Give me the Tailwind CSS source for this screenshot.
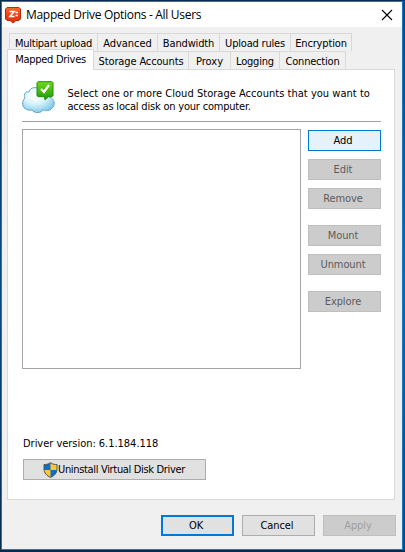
<!DOCTYPE html>
<html lang="en"><head><meta charset="utf-8"><title>Mapped Drive Options - All Users</title>
<script src="https://cdn.jsdelivr.net/npm/@tailwindcss/browser@4"></script></head>
<body class="w-[405px] h-[552px] overflow-hidden bg-linear-to-b from-[#062c55] via-[#064b88] to-[#052c50] pt-px pl-px font-['DejaVu_Sans_Condensed','DejaVu_Sans',sans-serif] font-stretch-condensed text-[11px] leading-[13px] text-black">
<div class="flex">
<main class="w-[402px] h-[549px] border border-[#1878c8] bg-[#f0f0f0] flex flex-col">
  <header class="h-[25px] shrink-0 bg-white flex items-center">
    <svg class="ml-[3px] mt-[2px] shrink-0" width="17" height="17" viewBox="0 0 17 17"><defs><linearGradient id="r" x2="0" y2="1"><stop stop-color="#ff6b35"/><stop offset=".5" stop-color="#ef3e12"/><stop offset="1" stop-color="#d73310"/></linearGradient></defs><path d="M2 .5h12l1.500 1.500v10L14 13.500h-3L8 16l-3-2.500H2L.5 12V2z" fill="url(#r)" stroke="#b52b0d"/><path d="M4.500 4.500h4.500L5 9.500h4.500M10.500 5.500h2.500M10.500 8.500h2.500" fill="none" stroke="#fff" stroke-width="1.700"/></svg>
    <h1 class="ml-[4px] text-[12px] leading-[16px] whitespace-nowrap font-['Open_Sans',sans-serif] font-stretch-normal tracking-[-0.300px]">Mapped Drive Options - All Users</h1>
    <svg class="ml-auto mr-[9px]" width="12" height="12" viewBox="0 0 12 12"><path d="M1 1l10 10M11 1L1 11" stroke="#000" stroke-width="1.100"/></svg>
  </header>
  <nav class="pt-[6px] whitespace-nowrap">
    <div class="ml-[7px] flex h-[18px] border-t border-l border-[#d9d9d9] w-[343px] *:border-r *:border-[#d9d9d9] *:flex *:justify-center *:pt-[3px] *:shrink-0">
      <span class="w-[88px] tracking-[-0.280px]">Multipart upload</span><span class="w-[60px] tracking-[-0.050px]">Advanced</span><span class="w-[62px] tracking-[-0.150px]">Bandwidth</span><span class="w-[71px] tracking-[-0.200px]">Upload rules</span><span class="w-[61px] tracking-[-0.150px]">Encryption</span>
    </div>
    <div class="ml-[5px] flex h-[18px]">
      <span class="relative z-10 -mt-[2px] h-[21px] w-[87px] border border-b-0 border-[#d9d9d9] bg-white flex justify-center pt-[3px] tracking-[-0.270px]">Mapped Drives</span>
      <div class="flex h-[18px] border-t border-[#d9d9d9] *:border-r *:border-[#d9d9d9] *:flex *:justify-center *:pt-[3px]"><span class="w-[95px] tracking-[-0.130px]">Storage Accounts</span><span class="w-[42px]">Proxy</span><span class="w-[49px] tracking-[-0.200px]">Logging</span><span class="w-[66px] tracking-[-0.200px]">Connection</span></div>
    </div>
  </nav>
  <section class="ml-[5px] w-[388px] h-[431px] shrink-0 border border-[#d9d9d9] bg-white pl-[14px] flex flex-col">
    <div class="flex h-[52px] w-[359px] border-b border-[#a0a0a0]">
      <svg class="mt-[11px] shrink-0" width="34" height="34" viewBox="0 0 34 34"><defs><radialGradient id="c" cx=".4" cy=".3" r=".8"><stop stop-color="#fff"/><stop offset=".45" stop-color="#d8f4fc"/><stop offset="1" stop-color="#6dbfe3"/></radialGradient><linearGradient id="g" x2="0" y2="1"><stop stop-color="#6fd91e"/><stop offset=".5" stop-color="#45ba12"/><stop offset="1" stop-color="#189709"/></linearGradient></defs><path d="M3 17C1 13 4 10 7 11C8 6 15 5 18 9C23 7 28 11 27 16C33 17 34 25 29 28C26 31 23 29 21 29C18 33 12 32 10 29C5 30 0 27 0.700 22C0.700 20 1.500 18 3 17Z" fill="url(#c)" stroke="#5b9dc3" stroke-width=".9"/><path d="M4 18C8 15 11 17 13 20C17 16 22 16 25 19" fill="none" stroke="#fff" stroke-opacity=".5" stroke-width="2"/><path d="M16 .7h14L31 1.700v13L30 15.700h-3.500L23 19l-.5-3.300H16L15 14.700v-13z" fill="url(#g)" stroke="#228d0d"/><path d="M19 8l3 3 5-7" fill="none" stroke="#fff" stroke-width="2.200"/></svg>
      <p class="ml-[11.5px] mt-[17px] whitespace-nowrap"><span class="tracking-[0.030px]">Select one or more Cloud Storage Accounts that you want to</span><br><span class="tracking-[-0.200px]">access as local disk on your computer.</span></p>
    </div>
    <div class="mt-[7px] flex">
      <div class="w-[279px] h-[240px] border border-[#a5a5a9] bg-white"></div>
      <div class="ml-[7px] mt-px flex flex-col gap-[8px] tracking-[-0.100px] *:w-[73px] *:h-[21px] *:border *:flex *:items-center *:justify-center *:pr-[3px]">
        <button class="border-[#0078d7] bg-[#e5f1fb]">Add</button>
        <button class="border-[#bfbfbf] bg-[#ccc] text-[#5c5c5c]">Edit</button>
        <button class="border-[#bfbfbf] bg-[#ccc] text-[#5c5c5c]">Remove</button>
        <button class="mt-[8px] border-[#bfbfbf] bg-[#ccc] text-[#5c5c5c]">Mount</button>
        <button class="border-[#bfbfbf] bg-[#ccc] text-[#5c5c5c]">Unmount</button>
        <button class="mt-[8px] border-[#bfbfbf] bg-[#ccc] text-[#5c5c5c]">Explore</button>
      </div>
    </div>
    <p class="ml-px mt-[68px] whitespace-nowrap tracking-[-0.030px]">Driver version: 6.1.184.118</p>
    <button class="ml-px mt-[9px] w-[183px] h-[21px] shrink-0 border border-[#adadad] bg-[#e1e1e1] flex items-center pl-[19px] whitespace-nowrap"><svg class="shrink-0" width="15" height="16" viewBox="0 0 15 16"><path d="M7.500.5C5 2.500 3 2.500 1 2.500V7C1 11 4 14 7.500 15.500C11 14 14 11 14 7V2.500C12 2.500 10 2.500 7.500.5Z" fill="#ffc52d"/><path d="M7.500.5C5 2.500 3 2.500 1 2.500V8h6.500zM7.500 8H14C13.500 12 11 14 7.500 15.500z" fill="#0c70c8"/><path d="M7.500.7C5 2.500 3 2.500 1 2.500V7C1 11 4 14 7.500 15.300C11 14 14 11 14 7V2.500C12 2.500 10 2.500 7.500.7Z" fill="none" stroke="#4b5660"/></svg><span class="tracking-[-0.330px]">Uninstall Virtual Disk Driver</span></button>
  </section>
  <footer class="mt-[15px] flex justify-end gap-[8px] pr-[6px] tracking-[-0.100px] *:w-[73px] *:h-[21px] *:flex *:items-center *:justify-center *:pr-[3px]">
    <button class="border-2 border-[#0078d7] bg-[#e1e1e1]">OK</button><button class="border border-[#adadad] bg-[#e1e1e1]">Cancel</button><button class="border border-[#bfbfbf] bg-[#ccc] text-[#a0a0a0]">Apply</button>
  </footer>
</main>
<div class="w-[2px] h-[549px] bg-linear-to-b from-[#064a88] via-[#006dc0] to-[#064a88]"></div>
</div>
</body></html>
